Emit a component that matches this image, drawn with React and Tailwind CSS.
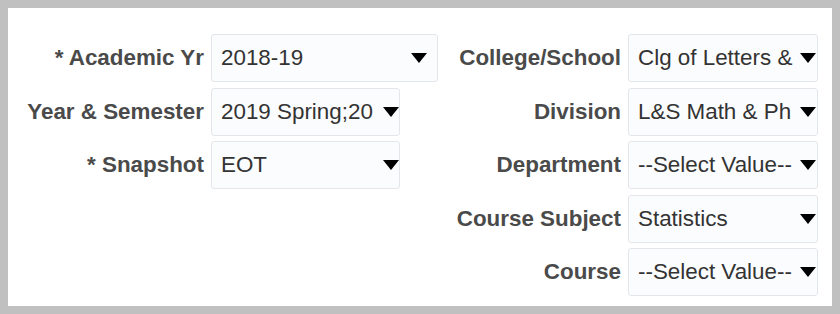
import React from "react";

function Arrow({ className = "" }) {
  return (
    <svg width="16" height="10" viewBox="0 0 16 10" className={"shrink-0 " + className}>
      <polygon points="0,0 16,0 8,10" fill="#000" />
    </svg>
  );
}

function Select({ value, w, arrowMr }) {
  return (
    <div
      className={
        "flex h-[48px] items-center rounded-[3px] border border-[#e3e6ea] bg-[#fbfcfd] pl-[9px] text-[22.4px] leading-normal text-[#333333] " +
        w
      }
    >
      <span className="flex-1 whitespace-nowrap">{value}</span>
      <Arrow className={arrowMr} />
    </div>
  );
}

function Label({ children }) {
  return (
    <div className="whitespace-nowrap text-right text-[22.4px] font-bold leading-normal text-[#4a4a4a]">
      {children}
    </div>
  );
}

export default function App() {
  const left = [
    ["* Academic Yr", "2018-19", "w-[227px]", "mr-[10px]"],
    ["Year & Semester", "2019 Spring;20", "w-[189px]", "mr-0"],
    ["* Snapshot", "EOT", "w-[189px]", "mr-0"],
  ];
  const right = [
    ["College/School", "Clg of Letters &"],
    ["Division", "L&S Math & Ph"],
    ["Department", "--Select Value--"],
    ["Course Subject", "Statistics"],
    ["Course", "--Select Value--"],
  ];
  return (
    <div
      className="h-[314px] w-[840px] bg-[#c0c0c0] p-[8px]"
      style={{ fontFamily: '"Liberation Sans", Arial, sans-serif' }}
    >
      <div className="flex h-full justify-between bg-white pr-[14px] pt-[26px]">
        <div className="grid grid-cols-[196px_auto] content-start items-center gap-x-[7px] gap-y-[5.5px]">
          {left.map(([l, v, w, mr]) => (
            <React.Fragment key={l}>
              <Label>{l}</Label>
              <div className="flex">
                <Select value={v} w={w} arrowMr={mr} />
              </div>
            </React.Fragment>
          ))}
        </div>
        <div className="grid grid-cols-[auto_190px] content-start items-center gap-x-[7px] gap-y-[5.5px]">
          {right.map(([l, v]) => (
            <React.Fragment key={l}>
              <Label>{l}</Label>
              <Select value={v} w="w-[190px]" arrowMr="mr-px" />
            </React.Fragment>
          ))}
        </div>
      </div>
    </div>
  );
}
